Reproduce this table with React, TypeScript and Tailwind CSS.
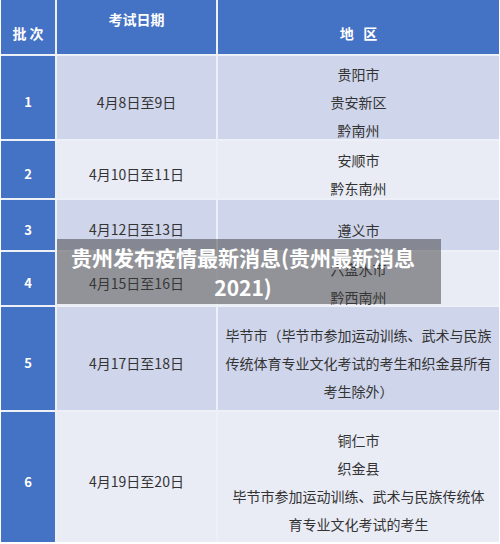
const ROWS = [
  { no: "1", date: "4月8日至9日", areas: ["贵阳市", "贵安新区", "黔南州"], h: "h-[83px]", odd: true },
  { no: "2", date: "4月10日至11日", areas: ["安顺市", "黔东南州"], h: "h-[57px]", odd: false },
  { no: "3", date: "4月12日至13日", areas: ["遵义市"], h: "h-[50px]", odd: true },
  { no: "4", date: "4月15日至16日", areas: ["六盘水市", "黔西南州"], h: "h-[53px]", odd: false },
  {
    no: "5",
    date: "4月17日至18日",
    areas: ["毕节市（毕节市参加运动训练、武术与民族", "传统体育专业文化考试的考生和织金县所有", "考生除外）"],
    h: "h-[103px]",
    odd: true,
  },
  {
    no: "6",
    date: "4月19日至20日",
    areas: ["铜仁市", "织金县", "毕节市参加运动训练、武术与民族传统体", "育专业文化考试的考生"],
    h: "h-[130px]",
    odd: false,
  },
];

export default function App() {
  return (
    <div
      className="relative w-[500px] h-[544px] bg-white pl-[1px] pr-[1px] text-[#333333]"
      style={{ fontFamily: '"Noto Sans CJK SC", "Noto Sans", sans-serif' }}
    >
      <div className="grid grid-cols-[54px_159px_281px] gap-[2px] bg-[#eef0f7]">
        {/* header */}
        <div className="h-[54px] bg-[#4472c4] flex items-center justify-center pt-[12px] text-[14px] font-bold text-white whitespace-pre">
          {"批 次"}
        </div>
        <div className="h-[54px] bg-[#4472c4] flex justify-center pt-[8px] text-[14px] leading-[22px] font-bold text-white">
          考试日期
        </div>
        <div className="h-[54px] bg-[#4472c4] flex items-center justify-center pt-[12px] text-[14px] font-bold text-white">
          地&nbsp;&nbsp;&nbsp;区
        </div>

        {ROWS.map((r) => (
          <div key={r.no} className="contents">
            <div
              className={`${r.h} bg-[#4472c4] flex items-center justify-center pt-[9px] text-[13px] font-bold text-white`}
            >
              {r.no}
            </div>
            <div
              className={`${r.h} ${r.odd ? "bg-[#cfd5ea]" : "bg-[#e9ebf5]"} flex items-center justify-center pt-[9px] text-[14px]`}
            >
              {r.date}
            </div>
            <div
              className={`${r.h} ${r.odd ? "bg-[#cfd5ea]" : "bg-[#e9ebf5]"} flex flex-col items-center justify-center pt-[9px] text-[14px] leading-[28px]`}
            >
              {r.areas.map((a) => (
                <span key={a} className="whitespace-nowrap">
                  {a}
                </span>
              ))}
            </div>
          </div>
        ))}
      </div>

      <div className="absolute left-[57px] top-[239px] w-[384px] h-[65px] bg-[rgba(60,60,60,0.5)] flex items-center justify-center pr-[12px]">
        <p className="text-center text-white font-bold text-[21px] leading-[30px]">
          贵州发布疫情最新消息(贵州最新消息
          <br />
          2021)
        </p>
      </div>
    </div>
  );
}
